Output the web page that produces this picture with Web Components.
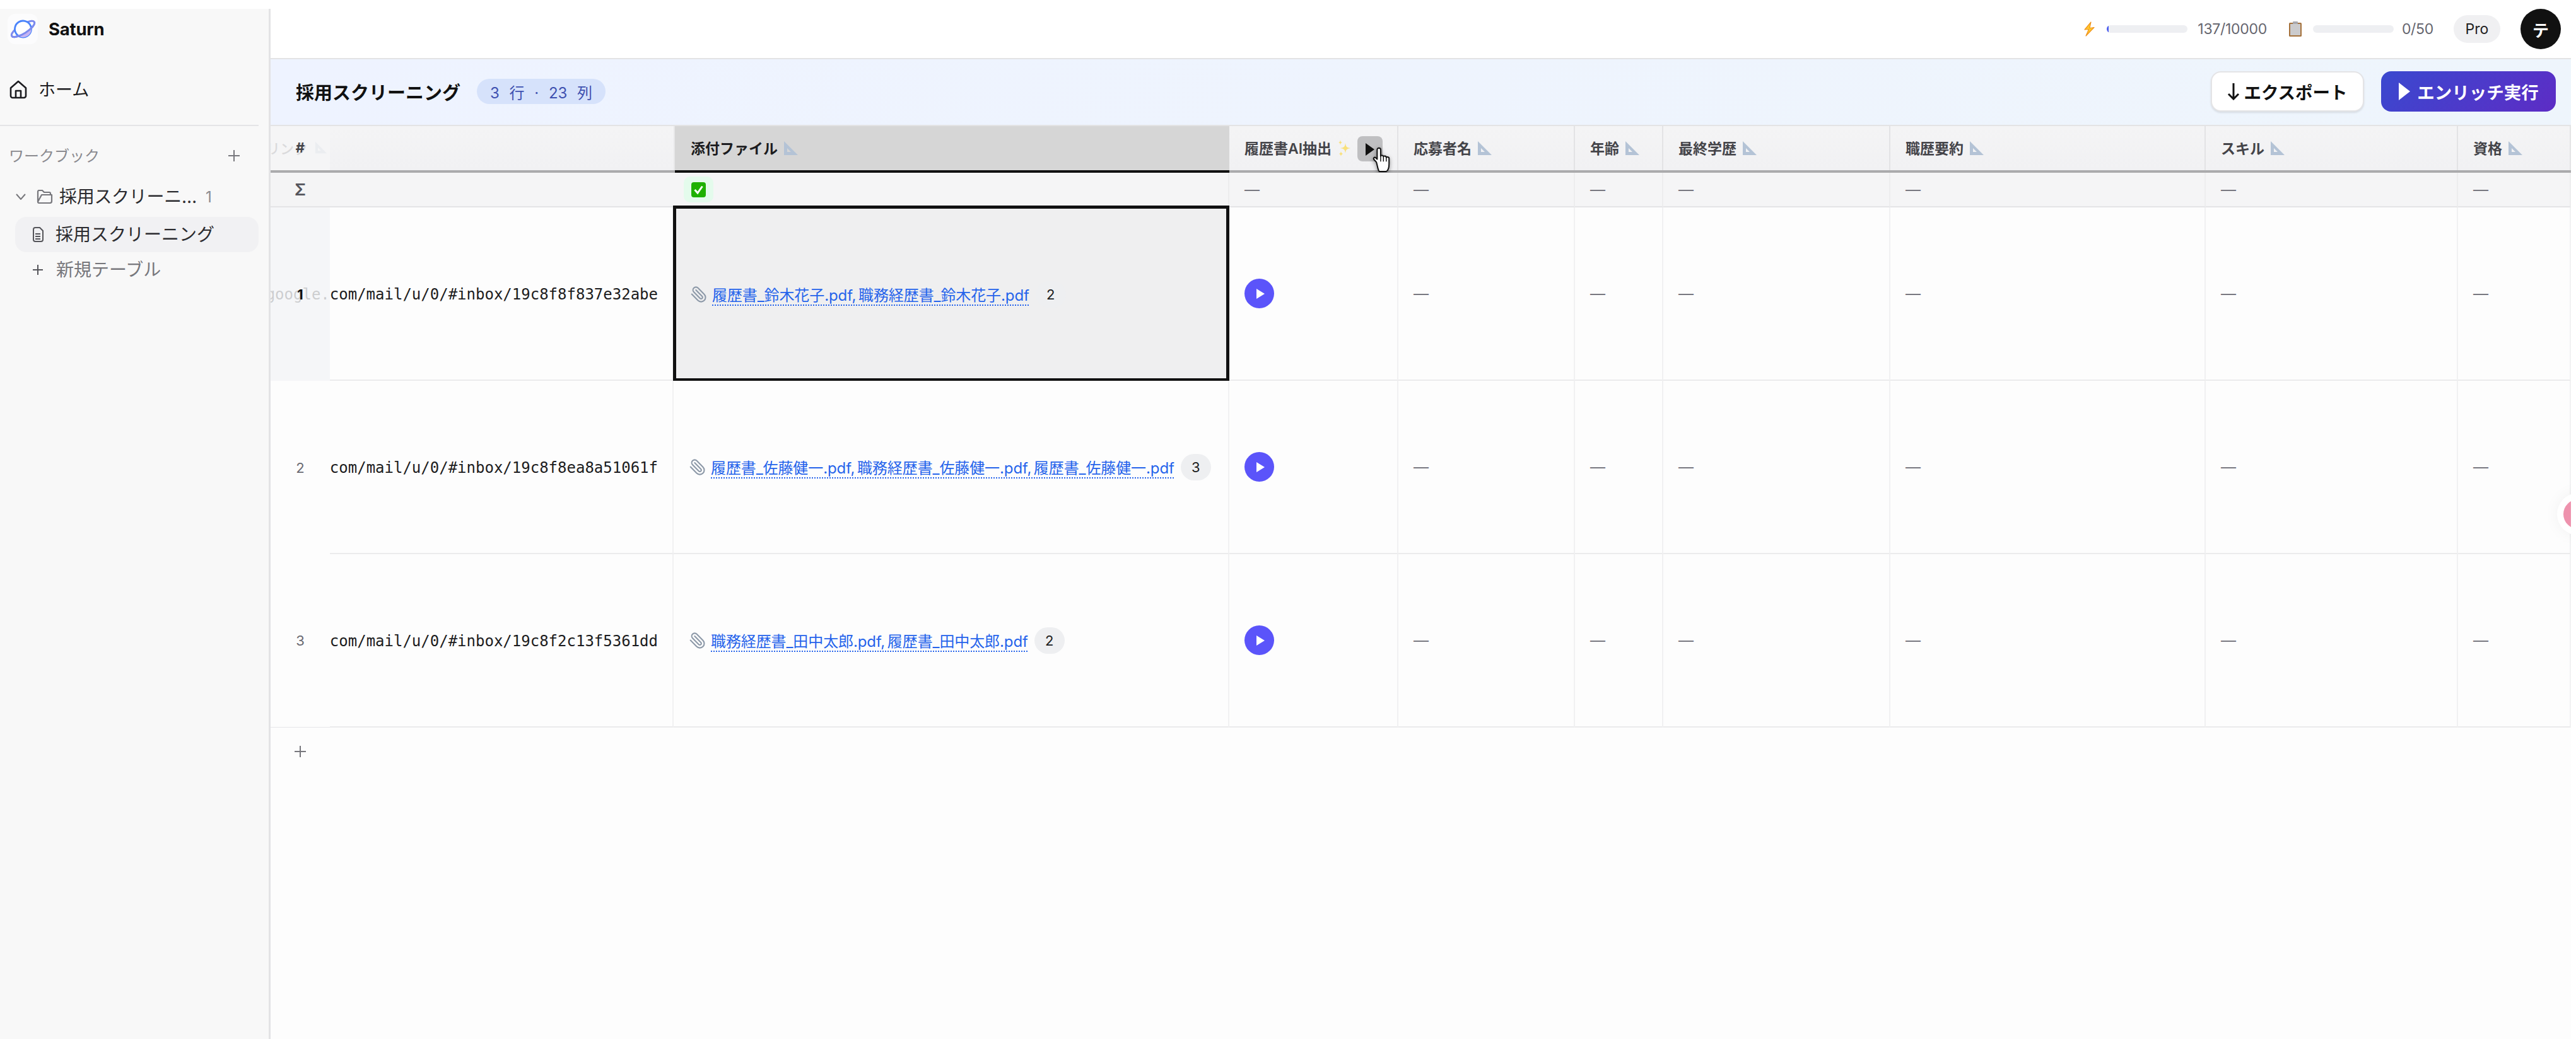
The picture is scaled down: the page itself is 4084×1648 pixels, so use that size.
<!DOCTYPE html>
<html lang="ja">
<head>
<meta charset="utf-8">
<title>Saturn</title>
<style>
    html, body {
        margin: 0;
        height: 100%;
        background: #fff;
    }
    body {
        font-family: Inter, "Noto Sans CJK JP", sans-serif;
        --cols: 94px 545px 881px 268px 280px 140px 360px 500px 400px 179px;
    }
</style>
</head>
<body>
<app-shell>
    <app-sidebar slot="side"></app-sidebar>
    <app-topbar></app-topbar>
    <table-toolbar title-text="採用スクリーニング" badge="3 行 · 23 列"></table-toolbar>
    <data-grid>
        <grid-row kind="head">
            <grid-cell frozen kind="head">#</grid-cell>
            <grid-cell kind="ghost"><ghost-head>リンク</ghost-head></grid-cell>
            <grid-cell kind="head" selected><col-head>添付ファイル</col-head></grid-cell>
            <grid-cell kind="head"><col-head icon="sparkle" run>履歴書AI抽出</col-head></grid-cell>
            <grid-cell kind="head"><col-head>応募者名</col-head></grid-cell>
            <grid-cell kind="head"><col-head>年齢</col-head></grid-cell>
            <grid-cell kind="head"><col-head>最終学歴</col-head></grid-cell>
            <grid-cell kind="head"><col-head>職歴要約</col-head></grid-cell>
            <grid-cell kind="head"><col-head>スキル</col-head></grid-cell>
            <grid-cell kind="head"><col-head>資格</col-head></grid-cell>
        </grid-row>
        <grid-row kind="sum">
            <grid-cell frozen kind="sum">Σ</grid-cell>
            <grid-cell kind="sum" plain></grid-cell>
            <grid-cell kind="sum"><check-chip></check-chip></grid-cell>
            <grid-cell kind="sum">—</grid-cell>
            <grid-cell kind="sum">—</grid-cell>
            <grid-cell kind="sum">—</grid-cell>
            <grid-cell kind="sum">—</grid-cell>
            <grid-cell kind="sum">—</grid-cell>
            <grid-cell kind="sum">—</grid-cell>
            <grid-cell kind="sum">—</grid-cell>
        </grid-row>
        <grid-row>
            <grid-cell frozen hover>1</grid-cell>
            <grid-cell kind="url">google.com/mail/u/0/#inbox/19c8f8f837e32abe</grid-cell>
            <grid-cell selected><file-list count="2">履歴書_鈴木花子.pdf, 職務経歴書_鈴木花子.pdf</file-list></grid-cell>
            <grid-cell><run-button></run-button></grid-cell>
            <grid-cell>—</grid-cell>
            <grid-cell>—</grid-cell>
            <grid-cell>—</grid-cell>
            <grid-cell>—</grid-cell>
            <grid-cell>—</grid-cell>
            <grid-cell>—</grid-cell>
        </grid-row>
        <grid-row>
            <grid-cell frozen>2</grid-cell>
            <grid-cell kind="url">com/mail/u/0/#inbox/19c8f8ea8a51061f</grid-cell>
            <grid-cell><file-list count="3">履歴書_佐藤健一.pdf, 職務経歴書_佐藤健一.pdf, 履歴書_佐藤健一.pdf</file-list></grid-cell>
            <grid-cell><run-button></run-button></grid-cell>
            <grid-cell>—</grid-cell>
            <grid-cell>—</grid-cell>
            <grid-cell>—</grid-cell>
            <grid-cell>—</grid-cell>
            <grid-cell>—</grid-cell>
            <grid-cell>—</grid-cell>
        </grid-row>
        <grid-row>
            <grid-cell frozen last>3</grid-cell>
            <grid-cell kind="url">com/mail/u/0/#inbox/19c8f2c13f5361dd</grid-cell>
            <grid-cell><file-list count="2">職務経歴書_田中太郎.pdf, 履歴書_田中太郎.pdf</file-list></grid-cell>
            <grid-cell><run-button></run-button></grid-cell>
            <grid-cell>—</grid-cell>
            <grid-cell>—</grid-cell>
            <grid-cell>—</grid-cell>
            <grid-cell>—</grid-cell>
            <grid-cell>—</grid-cell>
            <grid-cell>—</grid-cell>
        </grid-row>
        <add-row></add-row>
    </data-grid>
    <help-fab></help-fab>
</app-shell>

<script>
// every element below just stamps its static html into an open shadow root
class Base extends HTMLElement {
    constructor() {
        super();
        this.attachShadow({mode: 'open'});
        this.shadowRoot.innerHTML = this.render();
    }
    render() { return ''; }
}

const RULER = `<svg width="24" height="24" viewBox="0 0 24 24"><path fill="#b4c3d6" fill-rule="evenodd" d="M1 1 L23 23 H1 Z M6 12 V18 H12 Z"/></svg>`;
const SPARKLE = `<svg width="22" height="26" viewBox="0 0 22 26" fill="#f9e07a"><path d="M13 5 C14 11 15 12 21 13 C15 14 14 15 13 21 C12 15 11 14 5 13 C11 12 12 11 13 5Z"/><path d="M5 0 C5.500 3 6 3.500 8 4 C6 4.500 5.500 5 5 8 C4.500 5 4 4.500 2 4 C4 3.500 4.500 3 5 0Z"/><path d="M6 18 C6.400 20.500 7 21 9 22 C7 23 6.400 23.500 6 26 C5.600 23.500 5 23 3 22 C5 21 5.600 20.500 6 18Z"/></svg>`;

customElements.define('app-shell', class extends Base {
    render() { return `
        <style>
            :host { display: flex; height: 100vh; overflow: hidden; }
            main {
                flex: 0 0 3647px;
                position: relative;
                overflow: hidden;
                display: flex;
                flex-direction: column;
                background: #fdfdfd;
            }
        </style>
        <slot name="side"></slot>
        <main><slot></slot></main>`;
    }
});

customElements.define('app-sidebar', class extends Base {
    render() { return `
        <style>
            :host {
                flex: 0 0 429px;
                box-sizing: border-box;
                margin-top: 14px;
                background: #f8f8f8;
                border-right: 3px solid #e3e3e5;
                color: #2b2b2f;
                font-size: 28px;
                display: block;
            }
            .brand { display: flex; align-items: center; gap: 17px; margin: 8px 0 0 12px; height: 48px; }
            .logo { width: 48px; height: 48px; border-radius: 12px; background: #fcfcfd; display: flex; align-items: center; justify-content: center; }
            .brand b { font-size: 27.500px; font-weight: 700; color: #111; letter-spacing: -0.2px; }
            .row { display: flex; align-items: center; height: 56px; box-sizing: border-box; }
            .row span { position: relative; top: -2px; }
            .home { margin-top: 44px; padding-left: 15px; gap: 18px; color: #1c1c20; font-size: 27px; }
            hr { margin: 28px 0 0; border: 0; height: 2px; width: 410px; background: #e4e4e6; }
            .section { margin-top: 25px; height: 44px; padding: 0 45px 0 14px; justify-content: space-between; color: #8a8a8f; font-size: 24px; }
            .folder { margin-top: 15px; padding-left: 25px; }
            .folder .chev { margin-right: 17px; }
            .folder .name { width: 222px; margin-left: 10px; letter-spacing: -0.3px; white-space: nowrap; overflow: hidden; text-overflow: ellipsis; }
            .folder i { font-style: normal; font-size: 24px; color: #8a8a8f; margin-left: 10px; }
            .item { margin: 4px 16px 0 24px; height: 56px; padding-left: 27px; gap: 19px; background: #f1f1f3; border-radius: 18px; }
            .new { margin-left: 24px; padding-left: 27px; gap: 20px; color: #77777c; }
        </style>
        <div class="brand">
            <div class="logo">
                <svg width="44" height="36" viewBox="0 0 44 36" fill="none">
                    <g transform="translate(22.500 18) rotate(-32)">
                        <ellipse rx="21" ry="7" stroke="#7d8bee" stroke-width="3"/>
                        <circle r="13" fill="#fff" stroke="#4a84fb" stroke-width="2.800"/>
                        <path d="M-11.700 5.800 A21 7 0 0 0 11.700 5.800 A13 13 0 0 1 -11.700 5.800Z" fill="#c6b4f2"/>
                        <path d="M-21 0 A21 7 0 0 0 21 0" stroke="#7d8bee" stroke-width="3"/>
                    </g>
                </svg>
            </div>
            <b>Saturn</b>
        </div>
        <div class="row home">
            <svg width="28" height="30" viewBox="0 0 28 30" fill="none" stroke="#1c1c20" stroke-width="2.600" stroke-linejoin="round"><path d="M2 12.500 L14 2 L26 12.500 V25 A3 3 0 0 1 23 28 H5 A3 3 0 0 1 2 25 Z"/><path d="M10 28 V17 H18 V28"/></svg>
            <span>ホーム</span>
        </div>
        <hr>
        <div class="row section">
            <span>ワークブック</span>
            <svg width="20" height="20" viewBox="0 0 20 20" stroke="#77777c" stroke-width="2"><path d="M10 1 V19 M1 10 H19"/></svg>
        </div>
        <div class="row folder">
            <svg class="chev" width="16" height="10" viewBox="0 0 16 10" fill="none" stroke="#77777c" stroke-width="2"><path d="M1 1 L8 9 L15 1"/></svg>
            <svg width="26" height="22" viewBox="0 0 26 22" fill="none" stroke="#77777c" stroke-width="2.200" stroke-linejoin="round"><path d="M2 19 V3 A2 2 0 0 1 4 1 H9 L12 4 H20 A2 2 0 0 1 22 6 V8 H8 L2 19 Z"/><path d="M2 19 A2 2 0 0 0 4 21 H21 A3 3 0 0 0 24 18 V8 H8 "/></svg>
            <span class="name">採用スクリーニング</span>
            <i>1</i>
        </div>
        <div class="row item">
            <svg width="18" height="24" viewBox="0 0 18 24" fill="none" stroke="#55555a" stroke-width="2" stroke-linejoin="round"><path d="M2 4 A3 3 0 0 1 5 1 H12 L17 6 V20 A3 3 0 0 1 14 23 H5 A3 3 0 0 1 2 20 Z"/><path d="M5 11 H13 M5 15 H13 M5 19 H13"/></svg>
            <span>採用スクリーニング</span>
        </div>
        <div class="row new">
            <svg width="18" height="18" viewBox="0 0 18 18" stroke="#55555a" stroke-width="2"><path d="M9 1 V17 M1 9 H17"/></svg>
            <span>新規テーブル</span>
        </div>`;
    }
});

customElements.define('usage-meter', class extends Base {
    render() {
        const fill = this.getAttribute('fill') || '0';
        return `
        <style>
            :host { display: flex; align-items: center; color: #66666f; font-size: 23px; letter-spacing: -0.3px; }
            .bar { width: 128px; height: 12px; margin: 0 13px 0 18px; border-radius: 6px; background: #eeeff2; overflow: hidden; }
            :host([fill]) .bar { margin-right: 16px; }
            .bar div { height: 100%; width: ${fill}; background: #4a5cf0; }
        </style>
        <slot></slot>
        <div class="bar"><div></div></div>
        <span>${this.getAttribute('value')}</span>`;
    }
});

customElements.define('app-topbar', class extends Base {
    render() { return `
        <style>
            :host {
                display: flex;
                flex: 0 0 94px;
                box-sizing: border-box;
                align-items: center;
                justify-content: flex-end;
                padding-right: 16px;
                background: #fff;
                border-bottom: 2px solid #e3e3e5;
            }
            usage-meter { margin-right: 35px; }
            usage-meter:nth-of-type(2) { margin-right: 32px; }
            .pro { width: 74px; height: 44px; border-radius: 22px; background: #f0f0f2; display: flex; align-items: center; justify-content: center; font-size: 23px; color: #222; margin-right: 32px; }
            .avatar { width: 64px; height: 64px; border-radius: 50%; background: #111; color: #fff; display: flex; align-items: center; justify-content: center; font-size: 26px; font-weight: 600; }
        </style>
        <usage-meter value="137/10000" fill="3px">
            <svg width="20" height="24" viewBox="0 0 20 24"><path fill="#ffc72c" stroke="#f0931e" stroke-width="1.200" stroke-linejoin="round" d="M13 1 L3 13 L9.500 12.500 L5 23 L18 9.500 L11 10.500 Z"/></svg>
        </usage-meter>
        <usage-meter value="0/50">
            <svg width="20" height="24" viewBox="0 0 20 24"><rect x="0" y="2" width="20" height="22" rx="1.500" fill="#a5723c"/><rect x="2" y="4" width="16" height="18" fill="#cbcbcd"/><rect x="6" y="0" width="8" height="4" rx="1" fill="#a8a8ae"/></svg>
        </usage-meter>
        <div class="pro">Pro</div>
        <div class="avatar">テ</div>`;
    }
});

customElements.define('table-toolbar', class extends Base {
    render() { return `
        <style>
            :host {
                display: flex;
                flex: 0 0 106px;
                box-sizing: border-box;
                align-items: center;
                padding: 0 24px 2px 40px;
                background: linear-gradient(90deg, #eef3ff, #eef5fc);
                border-bottom: 2px solid #e3e3e5;
            }
            h1 { margin: 0; font-size: 29px; font-weight: 700; color: #111; }
            .badge { margin-left: 26px; width: 204px; justify-content: center; height: 40px; border-radius: 20px; background: #d6e2fb; color: #3f51b0; font-size: 24px; display: flex; align-items: center; word-spacing: 9px; white-space: nowrap; }
            .spacer { flex: 1; }
            button { font: inherit; font-size: 27.500px; font-weight: 700; height: 64px; border-radius: 16px; display: flex; align-items: center; padding: 0; justify-content: center; }
            .export { width: 243px; background: #fff; color: #111; border: 2px solid #e4e4e6; box-shadow: 0 2px 3px rgba(0,0,0,.1); margin-right: 27px; gap: 6px; }
            .run { width: 277px; border: 0; color: #fff; background: linear-gradient(135deg, #3a49cf, #5d2cc5); gap: 10px; }
        </style>
        <h1>${this.getAttribute('title-text')}</h1>
        <span class="badge">${this.getAttribute('badge')}</span>
        <div class="spacer"></div>
        <button class="export">
            <svg width="20" height="28" viewBox="0 0 20 28" fill="none" stroke="#111" stroke-width="3"><path d="M10 1 V26 M2 18 L10 26 L18 18"/></svg>
            <span>エクスポート</span>
        </button>
        <button class="run">
            <svg width="20" height="28" viewBox="0 0 20 28"><path fill="#fff" d="M1 0 L19 14 L1 28 Z"/></svg>
            <span>エンリッチ実行</span>
        </button>`;
    }
});

customElements.define('data-grid', class extends Base {
    render() { return `
        <style>:host { display: block; flex: 1; }</style>
        <slot></slot>`;
    }
});

customElements.define('grid-row', class extends Base {
    render() { return `
        <style>
            :host { display: grid; grid-template-columns: var(--cols); height: 275px; }
            :host([kind="head"]) { height: 74px; border-bottom: 4px solid #ababad; box-sizing: border-box; }
            :host([kind="sum"]) { height: 55px; }
        </style>
        <slot></slot>`;
    }
});

customElements.define('grid-cell', class extends Base {
    render() { return `
        <style>
            :host {
                display: flex;
                align-items: center;
                box-sizing: border-box;
                min-width: 0;
                padding-left: 24px;
                position: relative;
                background: #fdfdfd;
                border-right: 2px solid #f1f1f2;
                border-bottom: 2px solid #ebebec;
                color: #77777f;
                font-size: 24px;
                white-space: nowrap;
            }
            :host([frozen]) {
                z-index: 2;
                justify-content: center;
                padding: 0;
                border-right: 0;
                border-bottom: 0;
                color: #6a6a72;
                font-size: 22px;
            }
            :host([frozen][last]) { border-bottom: 1px solid #e6e6e8; }
            :host([hover]) { background: rgba(243,244,246,.82); color: #111; font-weight: 700; }
            :host([kind="url"]) {
                justify-content: flex-end;
                padding: 2px 23px 0 0;
                color: #1c1c20;
                font-family: "DejaVu Sans Mono", monospace;
                font-size: 24px;
            }
            :host([kind="head"]), :host([kind="ghost"]) {
                background: linear-gradient(180deg, #f4f4f5, #f1f1f3);
                border-bottom: 0;
                border-right: 2px solid #e3e3e5;
                color: #444449;
                font-size: 23px;
                font-weight: 600;
                padding-bottom: 3px;
            }
            :host([kind="ghost"]) { border-right: 0; padding-left: 0; }
            :host([kind="head"][frozen]) { background: rgba(243,243,245,.86); border-right: 0; font-size: 22px; font-weight: 700; }
            :host([kind="head"][selected]) {
                background: #d6d6d6;
                color: #1c1c20;
                border-right: 0;
                border-left: 2px solid #e8e8e9;
                z-index: 1;
                padding-left: 25px;
            }
            :host([kind="head"][selected])::after {
                content: '';
                position: absolute;
                left: 0;
                right: 0;
                bottom: -4px;
                height: 4px;
                background: #111;
            }
            :host([kind="sum"]) { background: #f5f5f6; border-bottom-color: #e4e4e6; border-right-color: #ededee; font-size: 24px; }
            :host([kind="sum"][frozen]) { background: #f4f4f5; border-bottom: 2px solid #e4e4e6; color: #55555c; font-size: 26px; font-weight: 600; }
            :host([kind="sum"][plain]) { border-right: 0; }
            :host([selected]:not([kind])) { background: #efeff0; border: 0; padding-left: 26px; }
            :host([selected]:not([kind]))::after {
                content: '';
                position: absolute;
                top: -3px;
                bottom: -1px;
                left: -1px;
                right: 0;
                border: 5px solid #111;
                pointer-events: none;
            }
        </style>
        <slot></slot>`;
    }
});

customElements.define('ghost-head', class extends Base {
    render() { return `
        <style>
            :host { display: flex; align-items: center; gap: 10px; margin-left: -101px; font-weight: 500; font-size: 22px; }
        </style>
        <slot></slot>${RULER.replace('width="24" height="24"', 'width="22" height="20"')}`;
    }
});

customElements.define('col-head', class extends Base {
    render() {
        const icon = this.getAttribute('icon') === 'sparkle' ? SPARKLE : RULER;
        const run = this.hasAttribute('run') ? `
            <div class="run">
                <svg width="16" height="20" viewBox="0 0 16 20"><path fill="#111" d="M1 0 L15 10 L1 20 Z"/></svg>
                <svg class="hand" width="32" height="40" viewBox="0 0 28 36"><path fill="#fff" stroke="#111" stroke-width="1.800" stroke-linejoin="round" d="M7 22 L3.500 18 C2 16.300 4 14 6 15.500 L8 17.500 V4 C8 .8 13 .8 13 4 V13.500 C13 11.500 17 11.500 17 14 C17 12.500 21 12.500 21 15 C21 14 25 14 25 16.500 V24 C25 30 23 34 21 35 H11 C9 33 8.500 27 7 22 Z"/><path fill="none" stroke="#111" stroke-width="1.300" d="M13 14 V21 M17 14 V21 M21 15 V21"/></svg>
            </div>` : '';
        return `
        <style>
            :host { display: flex; align-items: center; gap: 9px; }
            svg { flex: none; position: relative; top: 1px; }
            .run { position: relative; flex: none; top: 2px; margin-left: 1px; width: 40px; height: 40px; border-radius: 8px; background: #bfbfc1; display: flex; align-items: center; justify-content: center; }
            .hand { position: absolute; left: 22px; top: 17px; filter: drop-shadow(0 2px 3px rgba(0,0,0,.4)); }
        </style>
        <slot></slot>${icon}${run}`;
    }
});

customElements.define('check-chip', class extends Base {
    render() { return `
        <style>
            :host { display: flex; align-items: center; justify-content: center; width: 47px; height: 41px; margin-left: -8px; border-radius: 10px; background: #e4fbec; }
        </style>
        <svg width="23" height="24" viewBox="0 0 23 24"><rect width="23" height="24" rx="4" fill="#1eb100"/><path d="M5.500 12 L10 17 L17.500 6.500" fill="none" stroke="#fff" stroke-width="3"/></svg>`;
    }
});

customElements.define('file-list', class extends Base {
    render() { return `
        <style>
            :host { display: flex; align-items: center; color: #2563eb; font-size: 24px; letter-spacing: -0.1px; word-spacing: -3px; }
            svg { margin-right: 7px; transform: scaleX(-1); }
            a { color: inherit; text-decoration: underline dotted 2px; text-underline-offset: 6px; }
            .chip { margin-left: 10px; width: 48px; height: 42px; border-radius: 21px; background: #eeeff1; color: #1c1c20; display: flex; align-items: center; justify-content: center; font-size: 22px; }
        </style>
        <svg width="28" height="28" viewBox="0 0 24 24" fill="none" stroke="#8d99a8" stroke-width="1.800" stroke-linecap="round"><path d="m16 6-8.414 8.586a2 2 0 0 0 2.829 2.829l8.414-8.586a4 4 0 1 0-5.657-5.657l-8.379 8.551a6 6 0 1 0 8.485 8.485l8.379-8.551"/></svg>
        <a href="#"><slot></slot></a>
        <span class="chip">${this.getAttribute('count')}</span>`;
    }
});

customElements.define('run-button', class extends Base {
    render() { return `
        <style>
            :host { display: flex; align-items: center; justify-content: center; width: 47px; height: 47px; border-radius: 50%; background: #5b54fa; }
            svg { margin-left: 3px; }
        </style>
        <svg width="14" height="16" viewBox="0 0 14 16"><path fill="#fff" d="M1 0 L14 8 L1 16 Z"/></svg>`;
    }
});

customElements.define('add-row', class extends Base {
    render() { return `
        <style>
            :host { display: flex; align-items: center; justify-content: center; width: 94px; height: 76px; }
        </style>
        <svg width="20" height="20" viewBox="0 0 20 20" stroke="#77777c" stroke-width="2"><path d="M10 1 V19 M1 10 H19"/></svg>`;
    }
});

customElements.define('help-fab', class extends Base {
    render() { return `
        <style>
            :host {
                position: absolute;
                top: 792px;
                right: -35px;
                width: 47px;
                height: 47px;
                border-radius: 50%;
                background: #ee92ad;
                box-shadow: 0 0 0 10px #fff, 0 0 24px 10px rgba(0,0,0,.05);
            }
        </style>`;
    }
});
</script>
</body>
</html>
